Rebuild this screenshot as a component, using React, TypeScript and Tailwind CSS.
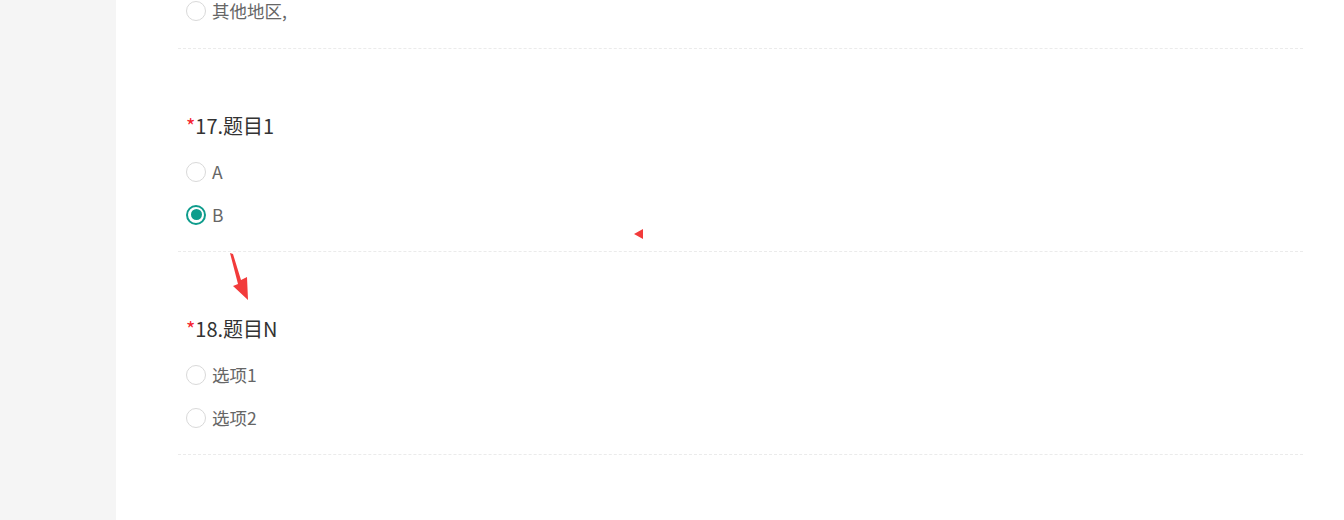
import React from "react";

type Question = {
  no: number;
  title: string;
  options: string[];
  checked?: number;
};

const questions: Question[] = [
  { no: 17, title: "题目1", options: ["A", "B"], checked: 1 },
  { no: 18, title: "题目N", options: ["选项1", "选项2"] },
];

function Radio({ label, checked }: { label: string; checked?: boolean }) {
  return (
    <label className="flex h-[43px] items-center">
      {checked ? (
        <span className="flex h-[20px] w-[20px] items-center justify-center rounded-full border-2 border-[#0e9c8c] bg-white">
          <span className="h-[11px] w-[11px] rounded-full bg-[#0e9c8c]" />
        </span>
      ) : (
        <span className="h-[20px] w-[20px] rounded-full border border-[#d9d9d9] bg-white" />
      )}
      <span className="ml-[6px] text-[17.5px] leading-[20px] text-[#666]">{label}</span>
    </label>
  );
}

export default function App() {
  return (
    <div
      className="relative flex h-[520px] w-[1344px] overflow-hidden bg-white"
      style={{ fontFamily: '"Noto Sans CJK SC", "Open Sans", sans-serif' }}
    >
      <aside className="h-full w-[116px] shrink-0 bg-[#f5f5f5]" />

      <main className="flex-1 pl-[62px] pr-[41px]">
        {/* tail of previous question */}
        <section className="border-b border-dashed border-[#ebebeb] pb-[16px] pl-[8px]">
          <div className="-mt-[11px]">
            <Radio label="其他地区," />
          </div>
        </section>

        {questions.map((q) => (
          <section
            key={q.no}
            className="border-b border-dashed border-[#ebebeb] pb-[15px] pl-[8px] pt-[63px]"
          >
            <h3 className="mb-[10px] flex h-7 items-center text-[20px] text-[#333]">
              <span className="text-[#f5222d]">*</span>
              {q.no}.{q.title}
            </h3>
            {q.options.map((o, i) => (
              <Radio key={o} label={o} checked={q.checked === i} />
            ))}
          </section>
        ))}
      </main>

      {/* annotation marks */}
      <svg className="absolute left-[226px] top-[252px]" width="28" height="52" viewBox="0 0 28 52">
        <polygon points="4,1 7,2 15,28 21,25 22,48 7,34 12,32" fill="#f23b3b" />
      </svg>
      <svg className="absolute left-[632px] top-[228px]" width="14" height="14" viewBox="0 0 14 14">
        <polygon points="2,6 11,1 11,11" fill="#f23b3b" />
      </svg>
    </div>
  );
}
